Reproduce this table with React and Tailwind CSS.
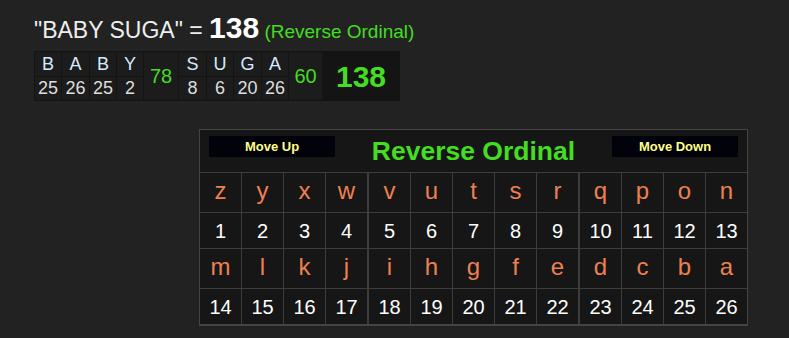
import React from 'react';

const FONT = { fontFamily: '"Liberation Sans", Arial, sans-serif' };

// word breakdown: letters with their reverse ordinal values
const words = [
  { letters: [['B', 25, 'w-[26px]'], ['A', 26, 'w-[27px]'], ['B', 25, 'w-[26px]'], ['Y', 2, 'w-[26px]']], total: 78, w: 'w-[34px]' },
  { letters: [['S', 8, 'w-[27px]'], ['U', 6, 'w-[26px]'], ['G', 20, 'w-[27px]'], ['A', 26, 'w-[26px]']], total: 60, w: 'w-[33px]' },
];

const alphabet = 'zyxwvutsrqponmlkjihgfedcba'.split('');

function Breakdown() {
  return (
    <div className="inline-flex bg-[#141414] p-px gap-px">
      {words.map((word, wi) => (
        <React.Fragment key={wi}>
          {word.letters.map(([ch, n, w], i) => (
            <div key={i} className={`flex flex-col gap-px ${w}`}>
              <div className="h-[24px] bg-[#1c1c1c] flex items-center justify-center text-[18px] text-[#d6eaff]">{ch}</div>
              <div className="h-[23px] bg-[#1c1c1c] flex items-center justify-center text-[18px] text-[#dedede]">{n}</div>
            </div>
          ))}
          <div className={`${word.w} bg-[#1c1c1c] flex items-center justify-center text-[20px] text-[#44dd22]`}>{word.total}</div>
        </React.Fragment>
      ))}
      <div className="w-[76px] bg-[#141414] flex items-center justify-center text-[30px] font-bold text-[#44dd22]">138</div>
    </div>
  );
}

function Cell({ idx, children, className }) {
  // thicker dividers after the 4th and 9th column
  let size = 'w-[42px] border-r';
  if (idx === 3 || idx === 8) size = 'w-[43px] border-r-2';
  if (idx === 12) size = 'w-[41px]';
  return (
    <div className={`${size} border-[#3d3d3d] flex items-center justify-center ${className}`}>
      {children}
    </div>
  );
}

function CipherTable() {
  const rows = [alphabet.slice(0, 13), alphabet.slice(13)];
  return (
    <div className="w-[549px] border border-b-2 border-[#444] bg-[#161616]">
      <div className="h-[42px] flex items-start px-[9px] pt-[6px]">
        <button className="w-[126px] h-[21px] bg-[#02020a] text-[#ffff88] text-[13px] font-bold flex items-center justify-center">Move Up</button>
        <div className="flex-1 text-center text-[26.5px] font-bold text-[#44dd22] leading-[30px]">Reverse Ordinal</div>
        <button className="w-[126px] h-[21px] bg-[#02020a] text-[#ffff88] text-[13px] font-bold flex items-center justify-center">Move Down</button>
      </div>
      {rows.map((row, ri) => (
        <React.Fragment key={ri}>
          <div className="flex h-[40px] border-t border-[#3d3d3d]">
            {row.map((ch, i) => (
              <Cell key={ch} idx={i} className="text-[24px] text-[#ee8050] pb-[3px]">{ch}</Cell>
            ))}
          </div>
          <div className="flex h-[36px] border-t border-[#3d3d3d]">
            {row.map((ch, i) => (
              <Cell key={ch} idx={i} className="text-[20px] text-white">{ri * 13 + i + 1}</Cell>
            ))}
          </div>
        </React.Fragment>
      ))}
    </div>
  );
}

export default function App() {
  return (
    <div className="min-h-screen bg-[#222222] pl-[34px] pt-[5px]" style={FONT}>
      <div className="flex items-baseline h-[46px] text-[#eeeeee]">
        <span className="text-[23px]">"BABY SUGA" =&nbsp;</span>
        <span className="text-[30px] font-bold text-white">138</span>
        <span className="text-[19px] text-[#44dd22]">&nbsp;(Reverse Ordinal)</span>
      </div>
      <Breakdown />
      <div className="ml-[165px] mt-[28px]">
        <CipherTable />
      </div>
    </div>
  );
}
